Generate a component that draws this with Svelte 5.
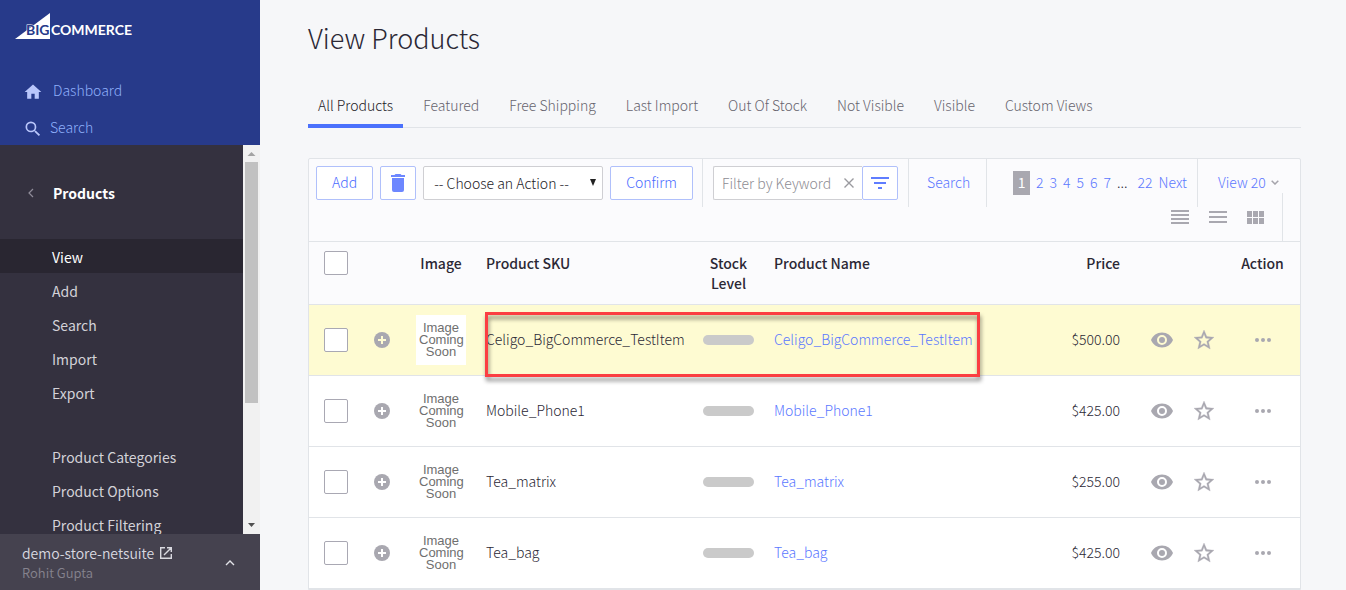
<script>
    const menu = ["View", "Add", "Search", "Import", "Export"];
    const submenu = ["Product Categories", "Product Options", "Product Filtering"];
    const tabs = ["All Products", "Featured", "Free Shipping", "Last Import", "Out Of Stock", "Not Visible", "Visible", "Custom Views"];
    const pages = [2, 3, 4, 5, 6, 7];
    const products = [
        { sku: "Celigo_BigCommerce_TestItem", price: "$500.00" },
        { sku: "Mobile_Phone1", price: "$425.00" },
        { sku: "Tea_matrix", price: "$255.00" },
        { sku: "Tea_bag", price: "$425.00" }
    ];

    let activeItem = $state("View");
    let activeTab = $state("All Products");
    let highlighted = $state(0);
    let keyword = $state("");
</script>

<div class="app">
    <aside>
        <div class="top">
            <a class="logo" href="#home" aria-label="BigCommerce">
                <svg width="120" height="28" viewBox="0 0 120 28">
                    <path d="M0 26 L35 0 V26 Z" fill="#fff" />
                    <text class="big" x="11" y="22">BIG</text>
                    <text x="36" y="22" fill="#fff">COMMERCE</text>
                </svg>
            </a>
            <a class="toplink" href="#dashboard">
                <svg width="20" height="20" viewBox="0 0 24 24"><path fill="#b9c6fb" d="M10 20v-6h4v6h5v-8h3L12 3 2 12h3v8z" /></svg>
                <span class="dash">Dashboard</span>
            </a>
            <a class="toplink" href="#search">
                <svg width="20" height="20" viewBox="0 0 24 24"><path fill="#b9c6fb" d="M15.5 14h-.79l-.28-.27A6.47 6.47 0 0 0 16 9.5 6.5 6.5 0 1 0 9.5 16c1.61 0 3.09-.59 4.23-1.57l.27.28v.79l5 4.99L20.49 19l-4.99-5zm-6 0A4.5 4.5 0 1 1 14 9.5 4.5 4.5 0 0 1 9.500 14z" /></svg>
                <span>Search</span>
            </a>
        </div>

        <div class="middle">
            <nav>
                <button class="back">
                    <svg width="6" height="10" viewBox="0 0 6 10"><path d="M5 1 L1 5 L5 9" fill="none" stroke="#8f8c99" stroke-width="1.2" /></svg>
                    Products
                </button>
                <ul>
                    {#each menu as item}
                        <li class:active={item == activeItem}><a href="#{item}" onclick={() => activeItem = item}>{item}</a></li>
                    {/each}
                </ul>
                <ul>
                    {#each submenu as item}
                        <li><a href="#{item}">{item}</a></li>
                    {/each}
                </ul>
            </nav>
            <div class="scrollbar">
                <svg width="17" height="17" viewBox="0 0 17 17"><path d="M4.500 11 L8.500 7 L12.500 11 Z" fill="#a3a3a3" /></svg>
                <div class="track"><div class="thumb"></div></div>
                <svg width="17" height="17" viewBox="0 0 17 17"><path d="M5 6 H12 L8.500 10 Z" fill="#505050" /></svg>
            </div>
        </div>

        <div class="account">
            <div>
                <a href="#store">
                    demo-store-netsuite
                    <svg width="12" height="12" viewBox="0 0 12 12"><path d="M5 .7 H.7 V11.300 H11.300 V7 M7 .7 H11.300 V5 M11.300 .7 L4 8" fill="none" stroke="#d9d9e0" stroke-width="1.400" /></svg>
                </a>
                <p>Rohit Gupta</p>
            </div>
            <button aria-label="Account menu">
                <svg width="10" height="6" viewBox="0 0 10 6"><path d="M1 5 L5 1 L9 5" fill="none" stroke="#e2e2e8" stroke-width="1.400" /></svg>
            </button>
        </div>
    </aside>

    <main>
        <h1>View Products</h1>

        <div class="tabs">
            {#each tabs as tab}
                <button class:active={tab == activeTab} onclick={() => activeTab = tab}>{tab}</button>
            {/each}
        </div>

        <section class="panel">
            <div class="toolbar">
                <div class="group actions">
                    <button class="btn">Add</button>
                    <button class="btn icon" aria-label="Delete">
                        <svg width="14" height="18" viewBox="0 0 14 18"><path fill="#6d87ff" d="M1 4 V16 A2 2 0 0 0 3 18 H11 A2 2 0 0 0 13 16 V4 Z M0 1 H3.500 L4.500 0 H9.500 L10.500 1 H14 V3 H0 Z" /></svg>
                    </button>
                    <div class="select">
                        <select aria-label="Choose an Action"><option>-- Choose an Action --</option></select>
                        <svg width="6" height="7" viewBox="0 0 6 7"><path d="M0 0 H6 L3 7 Z" fill="#222" /></svg>
                    </div>
                    <button class="btn">Confirm</button>
                </div>
                <div class="group filter">
                    <div class="field">
                        <input type="text" placeholder="Filter by Keyword" aria-label="Filter by Keyword" bind:value={keyword} />
                        <button aria-label="Clear" onclick={() => keyword = ""}>
                            <svg width="10" height="10" viewBox="0 0 10 10"><path d="M.5 .5 L9.500 9.500 M9.500 .5 L.5 9.500" stroke="#9a9a9f" stroke-width="1.400" /></svg>
                        </button>
                    </div>
                    <button class="btn icon" aria-label="Filter">
                        <svg width="18" height="12" viewBox="0 0 18 12"><path d="M0 0 H18 V2 H0 Z M3 5 H15 V7 H3 Z M7 10 H11 V12 H7 Z" fill="#5f7dff" /></svg>
                    </button>
                </div>
                <div class="group search"><a href="#advanced">Search</a></div>
                <div class="group pages">
                    <span class="current">1</span>
                    {#each pages as page}<a href="#page{page}">{page}</a>{/each}
                    <span class="dots">...</span>
                    <a href="#page22">22</a>
                    <a href="#next">Next</a>
                </div>
                <div class="group view">
                    <button>View 20
                        <svg width="8" height="5" viewBox="0 0 8 5"><path d="M.7 .7 L4 4 L7.300 .7" fill="none" stroke="#a5a4ab" stroke-width="1.500" /></svg>
                    </button>
                </div>
            </div>
            <div class="layouts">
                <button aria-label="Compact list"><svg width="18" height="14" viewBox="0 0 18 14"><path d="M0 0 H18 V2 H0 Z M0 4 H18 V6 H0 Z M0 8 H18 V10 H0 Z M0 12 H18 V14 H0 Z" fill="#a9a8b0" /></svg></button>
                <button aria-label="List"><svg width="18" height="12" viewBox="0 0 18 12"><path d="M0 0 H18 V2 H0 Z M0 5 H18 V7 H0 Z M0 10 H18 V12 H0 Z" fill="#a9a8b0" /></svg></button>
                <button aria-label="Grid"><svg width="18" height="13" viewBox="0 0 18 13"><path d="M0 0 H5 V6 H0 Z M6 0 H11 V6 H6 Z M12 0 H17 V6 H12 Z M0 7 H5 V13 H0 Z M6 7 H11 V13 H6 Z M12 7 H17 V13 H12 Z" fill="#a9a8b0" /></svg></button>
            </div>

            <table>
                <colgroup>
                    <col class="c-check" /><col class="c-plus" /><col class="c-image" /><col class="c-sku" /><col class="c-stock" />
                    <col /><col class="c-price" /><col class="c-icon" /><col class="c-icon" /><col class="c-action" />
                </colgroup>
                <thead>
                    <tr>
                        <th class="check"><input type="checkbox" aria-label="Select all" /></th>
                        <th></th>
                        <th class="center">Image</th>
                        <th>Product SKU</th>
                        <th class="center">Stock Level</th>
                        <th>Product Name</th>
                        <th class="price">Price</th>
                        <th></th>
                        <th></th>
                        <th class="center">Action</th>
                    </tr>
                </thead>
                <tbody>
                    {#each products as product, i}
                        <tr class:selected={i == highlighted}>
                            <td class="check"><input type="checkbox" aria-label="Select {product.sku}" /></td>
                            <td class="center">
                                <button aria-label="Expand"><svg width="16" height="16" viewBox="0 0 16 16"><circle cx="8" cy="8" r="8" fill="#a9a8b0" /><path class="plus" d="M8 4 V12 M4 8 H12" stroke-width="2" /></svg></button>
                            </td>
                            <td class="center"><div class="thumbnail">Image Coming Soon</div></td>
                            <td class="sku">
                                {product.sku}
                                {#if i == highlighted}<div class="outline"></div>{/if}
                            </td>
                            <td class="center"><div class="stock"></div></td>
                            <td><a href="#{product.sku}">{product.sku}</a></td>
                            <td class="price">{product.price}</td>
                            <td class="center">
                                <button aria-label="Visible"><svg width="22" height="16" viewBox="0 0 22 16"><path fill="#a9a8b0" fill-rule="evenodd" d="M11 .5 C6 .5 1.700 3.600 0 8 c1.700 4.400 6 7.500 11 7.500 s9.300-3.100 11-7.500 C20.300 3.600 16 .5 11 .5 Z M11 13 a5 5 0 1 1 0-10 5 5 0 0 1 0 10 Z M11 5 a3 3 0 1 0 0 6 3 3 0 0 0 0-6 Z" /></svg></button>
                            </td>
                            <td class="center">
                                <button aria-label="Featured"><svg width="24" height="24" viewBox="0 0 24 24"><path fill="#a9a8b0" stroke="#a9a8b0" stroke-width=".3" d="M22 9.240l-7.190-.62L12 2 9.190 8.630 2 9.240l5.460 4.730L5.820 21 12 17.270 18.180 21l-1.630-7.030L22 9.240zM12 15.400l-3.760 2.270 1-4.280-3.320-2.880 4.380-.38L12 6.100l1.710 4.040 4.380.38-3.320 2.880 1 4.280L12 15.400z" /></svg></button>
                            </td>
                            <td class="center">
                                <button aria-label="More actions"><svg width="16" height="4" viewBox="0 0 16 4"><circle cx="2" cy="2" r="2" fill="#a9a8b0" /><circle cx="8" cy="2" r="2" fill="#a9a8b0" /><circle cx="14" cy="2" r="2" fill="#a9a8b0" /></svg></button>
                            </td>
                        </tr>
                    {/each}
                </tbody>
            </table>
        </section>
    </main>
</div>

<style>
    :global(body) {
        margin: 0;
        background: #f6f7f9;
    }
    .app {
        display: flex;
        height: 100vh;
        overflow: hidden;
        font-family: "Noto Sans CJK SC", "Noto Sans", sans-serif;
        font-size: 14px;
        line-height: 20px;
        color: #2b2835;
    }
    .app * {
        box-sizing: border-box;
    }
    a {
        color: #5b78ff;
        text-decoration: none;
    }
    button {
        padding: 0;
        border: 0;
        background: none;
        font: inherit;
        color: #4a6bff;
        cursor: pointer;
    }
    svg {
        display: block;
        flex: none;
    }

    aside {
        display: flex;
        flex-direction: column;
        flex: none;
        width: 260px;
        background: #34313f;
    }
    .top {
        height: 145px;
        padding-top: 13px;
        background: #273a8a;
    }
    .logo {
        display: block;
        padding: 0 0 32px 15px;
    }
    .logo text {
        font: bold 14px Lato, sans-serif;
    }
    .logo .big {
        fill: #273a8a;
        stroke: #fff;
        stroke-width: 1;
        paint-order: stroke;
    }
    .toplink {
        display: flex;
        align-items: center;
        height: 37px;
        padding-left: 23px;
        gap: 7px;
        color: #8fb0fa;
        font-weight: 300;
    }
    .toplink span {
        padding-bottom: 3px;
    }
    .dash {
        padding-left: 3px;
    }
    .middle {
        display: flex;
        flex: 1;
        min-height: 0;
    }
    nav {
        flex: 1;
        overflow: hidden;
        padding-top: 31px;
    }
    .back {
        display: flex;
        align-items: center;
        height: 34px;
        padding-left: 28px;
        gap: 19px;
        color: #fff;
        font-weight: 700;
    }
    ul {
        margin: 0 0 30px;
        padding: 0;
        list-style: none;
    }
    .back + ul {
        margin-top: 29px;
    }
    li {
        height: 34px;
        line-height: 36px;
        padding-left: 52px;
    }
    li a {
        color: #d3d2d8;
    }
    li.active {
        background: #292631;
    }
    li.active a {
        color: #fff;
    }
    .scrollbar {
        display: flex;
        flex-direction: column;
        width: 17px;
        background: #f1f1f1;
    }
    .track {
        flex: 1;
        padding: 0 2px;
    }
    .thumb {
        height: 68%;
        background: #c1c1c1;
    }
    .account {
        display: flex;
        justify-content: space-between;
        align-items: center;
        height: 56px;
        padding: 2px 25px 0 22px;
        background: #45424f;
        font-weight: 350;
    }
    .account a {
        display: flex;
        align-items: center;
        gap: 6px;
        color: #d9d9e0;
    }
    .account p {
        margin: 0;
        font-size: 13px;
        color: #85838e;
    }

    main {
        flex: 1;
        min-width: 0;
        padding: 18px 45px 0 48px;
        font-weight: 300;
    }
    h1 {
        margin: 0;
        font-size: 27px;
        line-height: 40px;
        font-weight: 300;
    }
    .tabs {
        display: flex;
        gap: 10px;
        margin: 27px 0 30px;
        border-bottom: 1px solid #e1e4e8;
    }
    .tabs button {
        height: 43px;
        margin-bottom: -1px;
        padding: 1px 10px 0;
        border-bottom: 4px solid transparent;
        color: #66646e;
    }
    .tabs button.active {
        border-color: #4b71fc;
        color: #1d1a26;
    }

    .panel {
        border: 1px solid #e1e4e8;
        border-radius: 2px 2px 0 0;
        background: #fbfbfd;
    }
    .toolbar {
        display: flex;
    }
    .group {
        display: flex;
        height: 48px;
        padding-top: 7px;
        border-right: 1px solid #e1e4e8;
    }
    .group:last-child {
        border: 0;
    }
    .actions {
        gap: 7px;
        padding-left: 7px;
        padding-right: 9px;
    }
    .btn {
        height: 34px;
        padding: 0 15px 2px;
        border: 1px solid #b0c0fb;
        border-radius: 2px;
        background: #fff;
    }
    .btn.icon {
        display: flex;
        align-items: center;
        justify-content: center;
        width: 36px;
        padding: 0;
    }
    .select {
        position: relative;
        width: 180px;
    }
    .select svg {
        position: absolute;
        right: 7px;
        top: 13px;
        pointer-events: none;
    }
    select {
        appearance: none;
        width: 100%;
        height: 34px;
        padding: 0 10px;
        border: 1px solid #cfcfd3;
        border-radius: 2px;
        background: #fff;
        font: inherit;
        color: #1d1a26;
    }
    .filter {
        padding-left: 10px;
        padding-right: 10px;
    }
    .field {
        display: flex;
        align-items: center;
        width: 149px;
        height: 34px;
        padding: 0 8px;
        border: 1px solid #cfcfd3;
        border-right: 0;
        border-radius: 2px 0 0 2px;
        background: #fff;
    }
    .field input {
        flex: 1;
        min-width: 0;
        padding: 0;
        border: 0;
        outline: 0;
        font: inherit;
    }
    .field input::placeholder {
        color: #8d8c93;
    }
    .search a, .pages, .view {
        line-height: 32px;
    }
    .search {
        padding-left: 18px;
        padding-right: 16px;
    }
    .pages {
        flex: 1;
        justify-content: flex-end;
        padding-right: 10px;
        gap: 6px;
    }
    .current {
        width: 17px;
        height: 24px;
        margin-top: 5px;
        background: #a9a8b0;
        color: #fff;
        font-weight: 400;
        line-height: 22px;
        text-align: center;
    }
    .dots {
        padding-right: 4px;
    }
    .view {
        width: 102px;
        padding-left: 20px;
    }
    .view button {
        display: flex;
        align-items: center;
        height: 32px;
        gap: 5px;
        color: #5b78ff;
    }
    .layouts {
        display: flex;
        align-items: center;
        justify-content: flex-end;
        gap: 20px;
        width: fit-content;
        height: 48px;
        margin: -14px 17px 0 auto;
        padding-right: 17px;
        border-right: 1px solid #e1e4e8;
    }

    table {
        width: 100%;
        table-layout: fixed;
        border-spacing: 0;
    }
    .c-check { width: 49px; }
    .c-plus { width: 48px; }
    .c-image { width: 70px; }
    .c-sku { width: 217px; }
    .c-stock { width: 71px; }
    .c-price { width: 120px; }
    .c-icon { width: 42px; }
    .c-action { width: 75px; }
    th {
        padding: 11px 10px;
        border-top: 1px solid #e1e4e8;
        border-bottom: 1px solid #e1e4e8;
        font-weight: 500;
        text-align: left;
        vertical-align: top;
    }
    td {
        height: 71px;
        padding: 0 10px 2px;
        border-bottom: 1px solid #e1e4e8;
        background: #fff;
    }
    .selected td {
        background: #fefbd2;
    }
    .check {
        padding-left: 15px;
        padding-right: 0;
        padding-bottom: 0;
    }
    th.check {
        padding-top: 9px;
    }
    input[type="checkbox"] {
        appearance: none;
        display: block;
        width: 24px;
        height: 24px;
        margin: 0;
        border: 1px solid #a9a8b3;
        border-radius: 2px;
        background: #fff;
    }
    .center {
        text-align: center;
    }
    td.center {
        padding: 0;
    }
    .center button {
        display: block;
        margin: 0 auto;
    }
    .plus {
        stroke: #fff;
    }
    .selected .plus {
        stroke: #fefbd2;
    }
    th.price, td.price {
        padding-right: 21px;
        text-align: right;
    }
    .thumbnail {
        width: 50px;
        height: 50px;
        margin: 0 auto;
        padding: 7px 3px;
        background: #fff;
        color: #6f6f6f;
        font: 13px/12px "Liberation Sans", Arial, sans-serif;
    }
    .sku {
        position: relative;
    }
    .outline {
        position: absolute;
        left: 9px;
        top: 7px;
        z-index: 1;
        width: 495px;
        height: 65px;
        border: 3px solid #fb3e42;
        filter: drop-shadow(1px 4px 2px rgba(0, 0, 0, 0.45));
        pointer-events: none;
    }
    .stock {
        height: 10px;
        margin: 0 10px;
        border-radius: 5px;
        background: #cacaca;
    }
</style>
